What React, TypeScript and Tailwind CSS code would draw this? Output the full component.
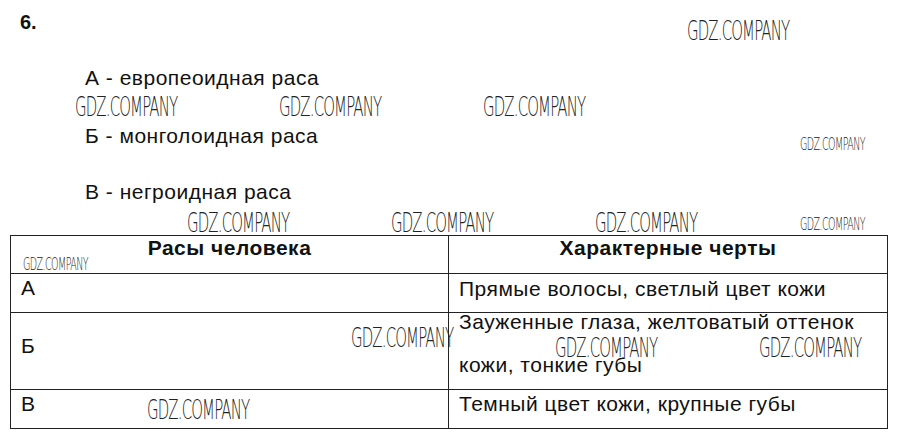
import React from "react";

type Mark = { x: number; y: number; small?: boolean };

const marks: Mark[] = [
    { x: 687, y: 18 },
    { x: 75, y: 94 },
    { x: 279, y: 94 },
    { x: 483, y: 94 },
    { x: 800, y: 136, small: true },
    { x: 187, y: 210 },
    { x: 391, y: 210 },
    { x: 595, y: 210 },
    { x: 800, y: 216, small: true },
    { x: 23, y: 256, small: true },
    { x: 351, y: 325 },
    { x: 555, y: 335 },
    { x: 759, y: 335 },
    { x: 147, y: 397 },
];

// водяной знак поверх страницы
const Watermark = ({ x, y, small }: Mark) => (
    <span
        className={
            small
                ? "absolute origin-top-left scale-x-[0.56] text-[17px] leading-none tracking-[-1px] font-extralight text-[#222] whitespace-nowrap font-['DejaVu_Sans_ExtraLight','DejaVu_Sans',sans-serif]"
                : "absolute origin-top-left scale-x-[0.575] text-[26px] leading-none tracking-[-1.5px] font-extralight text-[#222] whitespace-nowrap font-['DejaVu_Sans_ExtraLight','DejaVu_Sans',sans-serif]"
        }
        style={{ left: x, top: y }}
    >
        GDZ.COMPANY
    </span>
);

const App = () => {
    return (
        <div className="relative w-[900px] h-[442px] overflow-hidden bg-white text-[#111] font-['Liberation_Sans',Arial,sans-serif]">
            <div className="pl-[20px] pt-[10px] text-[20px] font-bold leading-[24px]">6.</div>

            <div className="flex flex-col ml-[85px] mt-[32px] text-[21px] leading-[24px] tracking-[0.5px]">
                <div>А - европеоидная раса</div>
                <div className="mt-[34px]">Б - монголоидная раса</div>
                <div className="mt-[32px]">В - негроидная раса</div>
            </div>

            <div className="ml-[10px] mt-[31px] w-[878px] grid grid-cols-[438px_439px] border-l border-t border-[#222] text-[21px] leading-[24px] tracking-[0.5px]">
                <div className="h-[38px] border-r border-b border-[#222] text-center font-bold">Расы человека</div>
                <div className="h-[38px] border-r border-b border-[#222] text-center font-bold">Характерные черты</div>

                <div className="h-[39px] border-r border-b border-[#222] pl-[10px] pt-[2px]">А</div>
                <div className="h-[39px] border-r border-b border-[#222] pl-[10px] pt-[3px]">Прямые волосы, светлый цвет кожи</div>

                <div className="h-[77px] border-r border-b border-[#222] pl-[10px] pt-[21px]">Б</div>
                <div className="h-[77px] border-r border-b border-[#222] pl-[10px] flex flex-col">
                    <div className="-mt-[3px]">Зауженные глаза, желтоватый оттенок</div>
                    <div className="mt-[19px]">кожи, тонкие губы</div>
                </div>

                <div className="h-[39px] border-r border-b border-[#222] pl-[10px] pt-[2px]">В</div>
                <div className="h-[39px] border-r border-b border-[#222] pl-[10px] pt-[2px]">Темный цвет кожи, крупные губы</div>
            </div>

            {marks.map((m, i) => (
                <Watermark key={i} {...m} />
            ))}
        </div>
    );
};

export default App;
